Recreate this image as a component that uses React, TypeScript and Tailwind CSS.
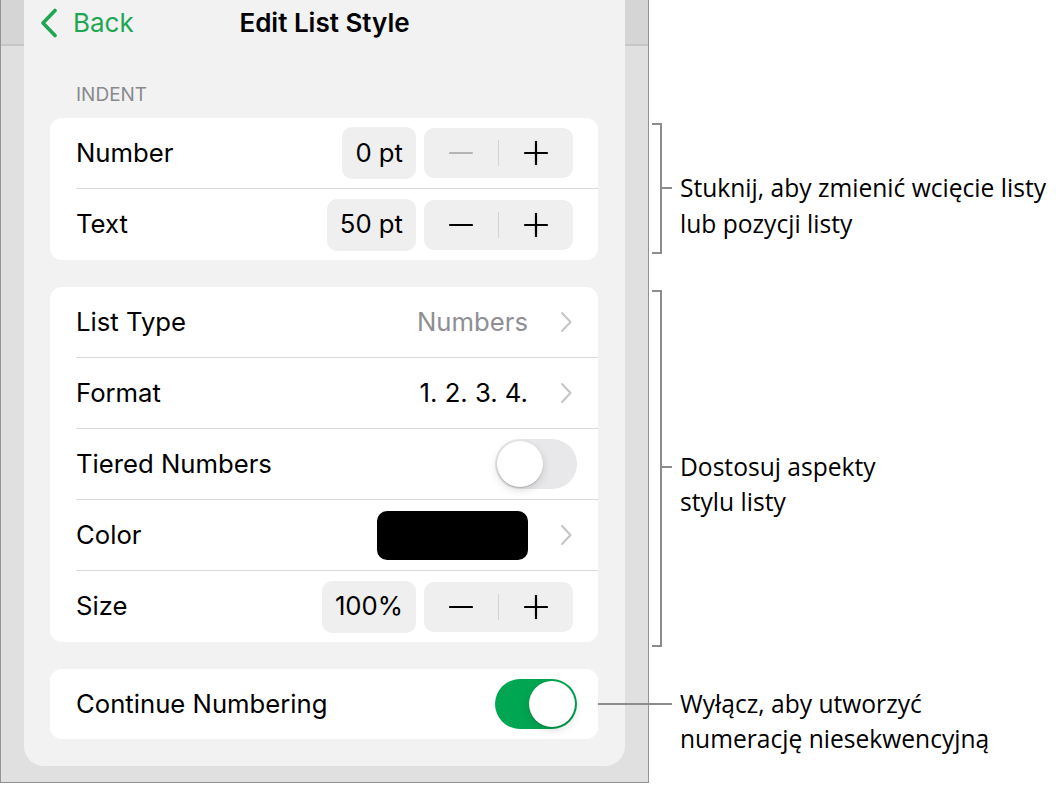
import React from 'react'
import clsx from 'clsx'

const Chevron = () => (
  <svg width="14" height="22" viewBox="0 0 14 22" className="ml-[31px]">
    <path d="M3 2 L11.5 11 L3 20" fill="none" stroke="#c5c5c8" strokeWidth="2" strokeLinecap="round" strokeLinejoin="round" />
  </svg>
)

const Row = ({ label, last, children }: { label: string; last?: boolean; children?: React.ReactNode }) => (
  <div
    className={clsx(
      'ml-[26px] flex h-[71px] items-center justify-between pr-[25px]',
      !last && 'border-b border-[#dadadc]'
    )}
  >
    <span className="text-[25.7px] text-black">{label}</span>
    <div className="flex items-center">{children}</div>
  </div>
)

const ValueBox = ({ value }: { value: string }) => (
  <div className="flex h-[52px] items-center rounded-[10px] bg-[#efefef] px-[13px] text-[25.7px] text-black">
    {value}
  </div>
)

const Stepper = ({ minusDisabled }: { minusDisabled?: boolean }) => (
  <div className="ml-2 flex h-[50px] w-[149px] items-center rounded-[10px] bg-[#efefef]">
    <div className="flex flex-1 justify-center">
      <svg width="24" height="24" viewBox="0 0 24 24">
        <path d="M1 12 H23" stroke={minusDisabled ? '#b4b4b6' : '#000'} strokeWidth="2.2" strokeLinecap="round" />
      </svg>
    </div>
    <div className="h-[26px] w-px bg-[#d2d2d4]" />
    <div className="flex flex-1 justify-center">
      <svg width="24" height="24" viewBox="0 0 24 24">
        <path d="M1 12 H23 M12 1 V23" stroke="#000" strokeWidth="2.2" strokeLinecap="round" />
      </svg>
    </div>
  </div>
)

const Toggle = ({ on }: { on?: boolean }) => (
  <div
    className={
      on
        ? '-mr-1 flex h-[50px] w-[82px] items-center justify-end rounded-full bg-[#00a651] p-[2px]'
        : '-mr-1 flex h-[50px] w-[82px] items-center rounded-full bg-[#e8e8ea] p-[2px]'
    }
  >
    <div className="h-[46px] w-[46px] rounded-full bg-white shadow-[0_3px_8px_rgba(0,0,0,0.15),0_1px_1px_rgba(0,0,0,0.16)]" />
  </div>
)

const Card = ({ children }: { children: React.ReactNode }) => (
  <div className="rounded-[12px] bg-white">{children}</div>
)

export default function App() {
  return (
    <div className="flex h-[785px] w-[1060px] bg-white font-['Inter','Noto_Sans',sans-serif]">
      {/* device frame */}
      <div className="h-[783px] w-[649px] shrink-0 border-x border-b border-[#939393] bg-[linear-gradient(#d5d5d5_0_44px,#c7c7c7_44px_46px,#e0e0e0_46px)]">
        <div className="ml-[23px] h-[766px] w-[601px] rounded-b-[20px] bg-[#f2f2f3]">
          {/* header */}
          <div className="grid h-[45px] grid-cols-[1fr_auto_1fr] items-center">
            <div className="flex items-center pl-[16px] text-[#1fa653]">
              <svg width="18" height="30" viewBox="0 0 18 30">
                <path d="M15 2.5 L3 15 L15 27.5" fill="none" stroke="#1fa653" strokeWidth="3.6" strokeLinecap="round" strokeLinejoin="round" />
              </svg>
              <span className="ml-[15px] text-[26px]">Back</span>
            </div>
            <div className="text-[26px] font-semibold text-black">Edit List Style</div>
            <div />
          </div>

          <div className="px-[26px] pr-[27px]">
            <div className="mt-[40px] h-[20px] pl-[26px] text-[19px] leading-[20px] text-[#8a8a8e]">INDENT</div>

            <div className="mt-[13px]">
              <Card>
                <Row label="Number">
                  <ValueBox value="0 pt" />
                  <Stepper minusDisabled />
                </Row>
                <Row label="Text" last>
                  <ValueBox value="50 pt" />
                  <Stepper />
                </Row>
              </Card>
            </div>

            <div className="mt-[27px]">
              <Card>
                <Row label="List Type">
                  <span className="text-[25.7px] text-[#8e8e93]">Numbers</span>
                  <Chevron />
                </Row>
                <Row label="Format">
                  <span className="text-[25.7px] text-black">1. 2. 3. 4.</span>
                  <Chevron />
                </Row>
                <Row label="Tiered Numbers">
                  <Toggle />
                </Row>
                <Row label="Color">
                  <div className="h-[49px] w-[151px] rounded-[10px] bg-black" />
                  <Chevron />
                </Row>
                <Row label="Size" last>
                  <ValueBox value="100%" />
                  <Stepper />
                </Row>
              </Card>
            </div>

            <div className="mt-[27px]">
              <div className="flex h-[70px] items-center justify-between rounded-[12px] bg-white pl-[26px] pr-[25px]">
                <span className="text-[25.7px] text-black">Continue Numbering</span>
                <Toggle on />
              </div>
            </div>
          </div>
        </div>
      </div>

      {/* callouts */}
      <div className="flex flex-col font-['Open_Sans','Lato',sans-serif] text-[24.6px] text-black">
        <div className="mt-[123px] flex items-start">
          <div className="ml-[3px] h-[131px] w-[10px] border-y-2 border-r-2 border-[#8c8c8c]" />
          <div className="mt-[64px] h-[2px] w-[10px] bg-[#8c8c8c]" />
          <div className="ml-[8px] mt-[47px] leading-[36px]">
            <div>Stuknij, aby zmienić wcięcie listy</div>
            <div>lub pozycji listy</div>
          </div>
        </div>

        <div className="mt-[36px] flex items-start">
          <div className="ml-[3px] h-[357px] w-[10px] border-y-2 border-r-2 border-[#8c8c8c]" />
          <div className="mt-[176px] h-[2px] w-[10px] bg-[#8c8c8c]" />
          <div className="ml-[8px] mt-[159px] leading-[35px]">
            <div>Dostosuj aspekty</div>
            <div>stylu listy</div>
          </div>
        </div>

        <div className="mt-[39px] flex items-start">
          <div className="relative -ml-[51px] mt-[17px] h-[2px] w-[74px] bg-[#8c8c8c]" />
          <div className="ml-[8px] leading-[35px]">
            <div>Wyłącz, aby utworzyć</div>
            <div>numerację niesekwencyjną</div>
          </div>
        </div>
      </div>
    </div>
  )
}
